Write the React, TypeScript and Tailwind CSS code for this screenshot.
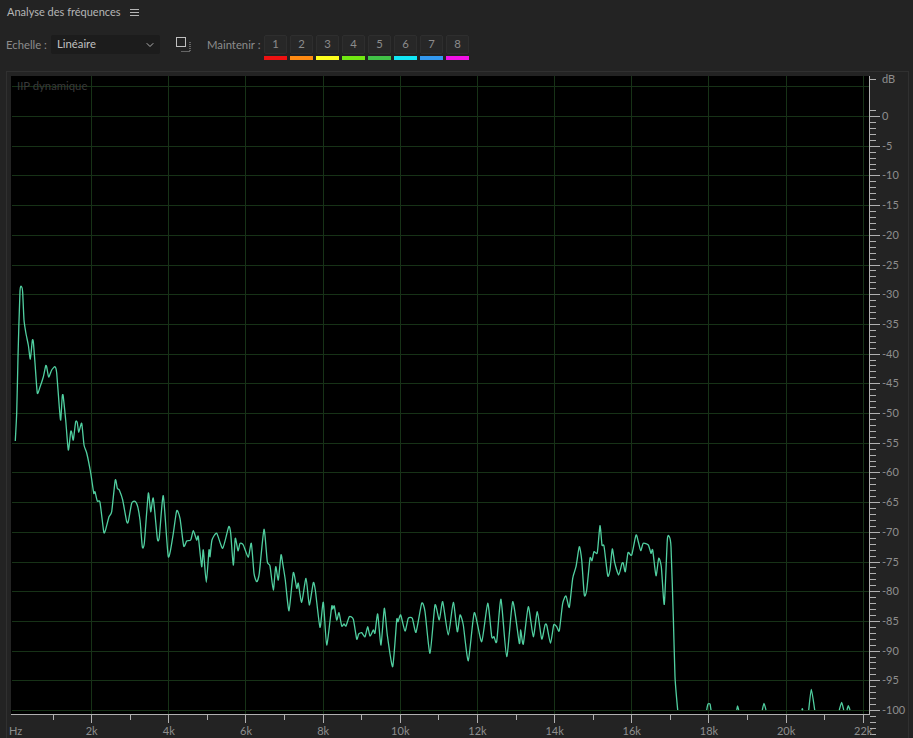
import { ChevronDown } from "lucide-react";

const holdColors = [
  "bg-[#ee1111]",
  "bg-[#ff8a12]",
  "bg-[#ffff1e]",
  "bg-[#72e812]",
  "bg-[#41c247]",
  "bg-[#12e6f5]",
  "bg-[#3399f0]",
  "bg-[#f212e6]",
];

// spectrum trace, in page pixels
const trace: number[][] = [
  [15.3, 441], [16.7, 413], [18, 357], [20, 291], [21.7, 287], [22.7, 293], [24, 320], [25.7, 332],
  [28.3, 345], [30.3, 359], [32.3, 340.7], [33.3, 341.7], [35, 363], [37.3, 393], [40, 387], [43.3, 377],
  [45.7, 365.7], [46.7, 367], [48.7, 377], [51.7, 370], [55, 366.7], [56.7, 373], [59.3, 407], [60.7, 420],
  [62.3, 396], [63.3, 396.7], [65.7, 420], [68.3, 450], [70.7, 431.7], [71.7, 432.5], [73.3, 440], [75.7, 421.7],
  [77.3, 422.7], [78.7, 432.3], [81.7, 423.3], [84, 445], [86.7, 453], [90.7, 473], [93.7, 493], [95, 491.7],
  [97.3, 501], [100, 502.3], [103.7, 531.7], [105.3, 530.7], [109, 516.7], [111.7, 511.7], [115.3, 480], [117.3, 488.3],
  [119.3, 490], [122.7, 500], [126.7, 521.7], [128.3, 521.7], [131.7, 503.3], [135, 501.3], [137.7, 506.7], [140, 520],
  [142.3, 546.7], [144.3, 543.3], [148.3, 493.3], [150.7, 511.7], [153.3, 498.3], [157.3, 538.3], [159.3, 537.3], [163.3, 495.7],
  [168.3, 556.7], [173.3, 533.3], [176.7, 510.7], [180, 518.3], [183.7, 546], [186.7, 541], [190.7, 540], [193.3, 530.7],
  [196.7, 540], [198.3, 536.7], [201.7, 566.7], [203.3, 550], [206.3, 582.3], [209, 550], [210, 556.7], [212, 540],
  [216.7, 533.3], [222.7, 548.3], [228.7, 526.7], [230.7, 533.3], [233.3, 565], [235.3, 538.3], [238, 550.7], [240, 543.3],
  [243.3, 545], [248.3, 557.3], [251.3, 543.3], [254, 573.3], [256.7, 581.7], [259.3, 573.3], [264, 529.3], [267.3, 561.7],
  [270, 566], [273.3, 590], [275.7, 566.7], [278.3, 580], [281, 555], [282.7, 563.3], [285.3, 580], [289, 610.7],
  [293.3, 572.7], [296.7, 588.3], [298.3, 583.3], [301.7, 602.3], [306, 578.3], [309.3, 605], [313.3, 582.7], [315.3, 590],
  [320, 627.3], [323.3, 602.3], [326.7, 645], [331.7, 606.7], [332.7, 609], [334.3, 606], [336.7, 620], [339, 612.7],
  [341.7, 626], [344, 624], [346, 626], [349.3, 616.7], [353.3, 619.3], [356.7, 639], [358.7, 634], [361.7, 632.7],
  [365, 636.7], [367.7, 626.7], [370, 636], [373.3, 630], [375, 633], [377.7, 614], [381, 645], [384.3, 608.3],
  [387.3, 635], [392.7, 666.7], [396.7, 620], [398, 621.7], [400.7, 615], [405, 631], [408.3, 618.3], [412.3, 618.3],
  [416, 632.3], [421.7, 603.3], [425, 611.7], [430, 653.3], [435, 605], [439.3, 620], [442.7, 601.7], [448.3, 635],
  [453.3, 602.3], [457.3, 631.7], [460, 615], [463.3, 625], [468.3, 660.7], [474.3, 612.7], [481.7, 641.7], [487.7, 603.3],
  [491.7, 636.7], [494, 636.7], [496.7, 641.7], [501, 599.3], [506.7, 656.7], [512.7, 601.7], [519.3, 643.3], [520.7, 630],
  [523.3, 644], [528.3, 606.7], [533.3, 636.7], [537.3, 611.7], [541.7, 639], [545, 625], [546.7, 625], [550.5, 643.3],
  [553.7, 625], [556.7, 626.7], [559.3, 630.7], [562.7, 603.3], [566, 596], [569.3, 607.3], [572.7, 578.3], [576, 566.7],
  [579.3, 546.7], [581.7, 560], [584.3, 595], [586.7, 590], [590, 558.3], [592, 560.7], [594, 551.7], [597.3, 552.7],
  [600, 525.7], [602, 545], [604, 546], [607.7, 575.7], [610, 570], [612.3, 549], [614.7, 562.7], [618.7, 575],
  [622, 563.3], [623.3, 563.3], [625.3, 571.7], [628, 552.7], [631.7, 555], [636, 535], [638.3, 541.7], [640.7, 550.7],
  [643.3, 543.3], [648.3, 545], [651, 553.3], [652.7, 550], [656, 575.7], [658.7, 558.3], [661.3, 566.7], [664.3, 604.3],
  [667.3, 540], [669.3, 536.7], [671, 546.7], [673.3, 616.7], [675, 676.7], [677.7, 710],
];

const bumps: number[][][] = [
  [[706.7, 710], [708, 704], [710, 704], [711, 710]],
  [[736.7, 710], [737.5, 706], [738.7, 710]],
  [[762.3, 710], [764, 703.3], [766, 710]],
  [[801.7, 710], [802.3, 708.7], [803, 710]],
  [[808.7, 710], [811.3, 689.3], [814.7, 710]],
  [[839.3, 710], [841.7, 702.3], [843.7, 710]],
  [[847, 710], [848.3, 705.7], [850, 710]],
];

// catmull-rom through the points, kept slack so peaks don't overshoot
function smooth(pts: number[][]) {
  let d = `M${pts[0][0]} ${pts[0][1]}`;
  for (let i = 0; i < pts.length - 1; i++) {
    const p0 = pts[i - 1] || pts[i];
    const p1 = pts[i];
    const p2 = pts[i + 1];
    const p3 = pts[i + 2] || p2;
    const c1x = p1[0] + (p2[0] - p0[0]) / 10;
    const c1y = p1[1] + (p2[1] - p0[1]) / 10;
    const c2x = p2[0] - (p3[0] - p1[0]) / 10;
    const c2y = p2[1] - (p3[1] - p1[1]) / 10;
    d += `C${c1x.toFixed(1)} ${c1y.toFixed(1)} ${c2x.toFixed(1)} ${c2y.toFixed(1)} ${p2[0]} ${p2[1]}`;
  }
  return d;
}

const kX = (k: number) => 14.5 + k * 38.58;
const dbY = (db: number) => 116.5 - db * 5.94;

function Spectrum() {
  const kHz = Array.from({ length: 22 }, (_, i) => i + 1);
  const dBs = Array.from({ length: 21 }, (_, i) => -i * 5);
  const minor = Array.from({ length: 106 }, (_, i) => 1 - i);
  return (
    <svg viewBox="7 72 901 666" className="block w-[901px] h-[666px]">
      <rect x="11" y="76" width="858" height="638" fill="#000" />
      <g stroke="#173217" strokeWidth="1" shapeRendering="crispEdges">
        <line x1="12" x2="869" y1="86.5" y2="86.5" />
        {dBs.map((db) => (
          <line key={db} x1="12" x2="869" y1={dbY(db)} y2={dbY(db)} />
        ))}
        {kHz.filter((k) => k % 2 === 0).map((k) => (
          <line key={k} x1={kX(k)} x2={kX(k)} y1="76" y2="714" />
        ))}
      </g>
      <text x="17" y="90" fontSize="11.3" fill="#3a3a3a">IIP dynamique</text>
      <path d={smooth(trace)} fill="none" stroke="#50cfa0" strokeWidth="1.3" strokeLinejoin="round" />
      {bumps.map((b, i) => (
        <path key={i} d={smooth(b)} fill="none" stroke="#50cfa0" strokeWidth="1.3" />
      ))}
      <g stroke="#b0b0b0" strokeWidth="1" shapeRendering="crispEdges">
        <line x1="11" x2="870" y1="714.5" y2="714.5" />
        <line x1="869.5" x2="869.5" y1="76" y2="714" />
        <line x1="870" x2="876" y1="79.5" y2="79.5" />
        {kHz.map((k) => (
          <line key={k} x1={kX(k)} x2={kX(k)} y1="714" y2={k % 2 === 0 ? 723 : 720} />
        ))}
        {minor.map((db) => (
          <line key={db} x1="870" x2={db % 5 === 0 ? 880 : 876} y1={dbY(db)} y2={dbY(db)} />
        ))}
      </g>
      <g fontSize="11" fill="#8e8e8e">
        <text x="882" y="83">dB</text>
        {dBs.map((db) => (
          <text key={db} x="882" y={dbY(db) + 3.5}>{db}</text>
        ))}
        <text x="9" y="735">Hz</text>
        {kHz.filter((k) => k % 2 === 0).map((k) => (
          <text key={k} x={kX(k)} y="735" textAnchor="middle">{k}k</text>
        ))}
      </g>
    </svg>
  );
}

export default function App() {
  return (
    <div className="w-[913px] h-[738px] overflow-hidden flex flex-col bg-[#232323] font-['Lato',sans-serif] text-[11.3px] text-[#8c8c8c]">
      <header className="h-[25px] pl-[7px] flex items-center gap-[9px]">
        <span className="text-[#b5b5b5] text-[11px]">Analyse des fréquences</span>
        <div className="w-[9px] flex flex-col gap-[2px]">
          <div className="h-px bg-[#b5b5b5]" />
          <div className="h-px bg-[#b5b5b5]" />
          <div className="h-px bg-[#b5b5b5]" />
        </div>
      </header>
      <div className="h-[46px] pl-[6px] pt-[10px] flex items-start">
        <span className="leading-[19px] w-[45px]">Echelle :</span>
        <div className="w-[109px] h-[19px] bg-[#1c1c1c] rounded-[2px] pl-[6px] pr-[4px] flex items-center justify-between text-[#c0c0c0]">
          <span>Linéaire</span>
          <ChevronDown className="w-3 h-3 text-[#b0b0b0]" />
        </div>
        <svg viewBox="0 0 15 15" className="w-[15px] h-[15px] ml-[16px] mt-[2px]" fill="none">
          <rect x="0.5" y="0.5" width="9" height="9" stroke="#c0c0c0" />
          <path d="M14 5v9.5H5" stroke="#a8a8a8" strokeDasharray="1 1" />
        </svg>
        <span className="leading-[19px] ml-[16px] w-[57px]">Maintenir :</span>
        <div className="flex gap-[3px]">
          {holdColors.map((c, i) => (
            <div key={i} className="w-[23px]">
              <div className="h-[19px] bg-[#272727] border border-[#2e2e2e] rounded-[2px] flex items-center justify-center">
                {i + 1}
              </div>
              <div className={`h-[4px] mt-[2px] ${c}`} />
            </div>
          ))}
        </div>
      </div>
      <main className="flex-1 ml-[6px] mr-[4px] border-t border-x border-[#303030]">
        <Spectrum />
      </main>
    </div>
  );
}
